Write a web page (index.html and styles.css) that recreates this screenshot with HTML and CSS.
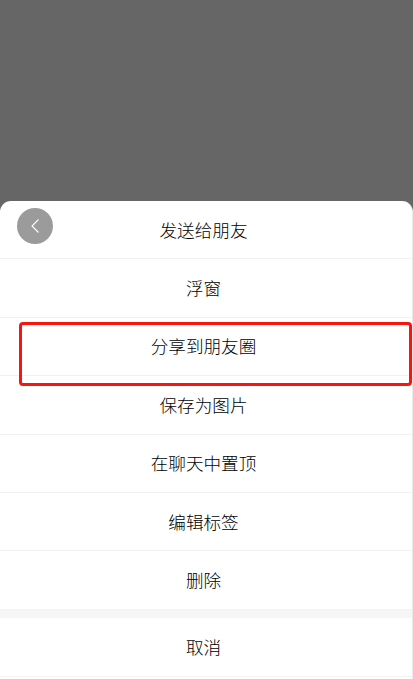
FILE: index.html
```html
<!DOCTYPE html>
<html lang="zh">
<head>
<meta charset="utf-8">
<title>操作菜单</title>
<link rel="stylesheet" href="styles.css">
</head>
<body>
<div class="screen">
  <div class="sheet">
    <button class="back" aria-label="返回">
      <svg viewBox="0 0 36 36" width="36" height="36"><path d="M21.5 11.5 L15 18 L21.5 24.5" fill="none" stroke="#fff" stroke-width="1.1"/></svg>
    </button>
    <div class="row">发送给朋友</div>
    <div class="row">浮窗</div>
    <div class="row">分享到朋友圈</div>
    <div class="row">保存为图片</div>
    <div class="row">在聊天中置顶</div>
    <div class="row">编辑标签</div>
    <div class="row">删除</div>
    <div class="gap"></div>
    <div class="row cancel">取消</div>
    <div class="highlight"></div>
  </div>
</div>
</body>
</html>
```
FILE: styles.css
```css
html, body {
  margin: 0;
  padding: 0;
  height: 100%;
}
.screen {
  width: 413px;
  height: 679px;
  display: flex;
  flex-direction: column;
  padding-top: 201px;
  box-sizing: border-box;
  background: #666;
  overflow: hidden;
  font-family: "Liberation Sans", "Noto Sans CJK SC", sans-serif;
  font-weight: 300;
}
.sheet {
  position: relative;
  flex: 1;
  width: 412px;
  background: #fff;
  border-radius: 11px 11px 0 0;
  border-right: 1px solid #eaeaea;
  box-sizing: content-box;
}
.row {
  height: 58.4px;
  box-sizing: border-box;
  display: flex;
  align-items: center;
  justify-content: center;
  padding: 0 5px 1px 0;
  font-size: 17.6px;
  color: #000;
  border-bottom: 1px solid #f2f2f2;
}
.gap {
  height: 8px;
  background: #f6f6f6;
}
.cancel {
  height: 59px;
}
.back {
  position: absolute;
  left: 17px;
  top: 7px;
  width: 36px;
  height: 36px;
  padding: 0;
  border: 0;
  border-radius: 50%;
  background: #9b9b9b;
}
.back svg {
  display: block;
}
.highlight {
  position: absolute;
  left: 19px;
  top: 121px;
  width: 393px;
  height: 64px;
  box-sizing: border-box;
  border: 3px solid #f8150d;
  border-radius: 4px;
}
```
